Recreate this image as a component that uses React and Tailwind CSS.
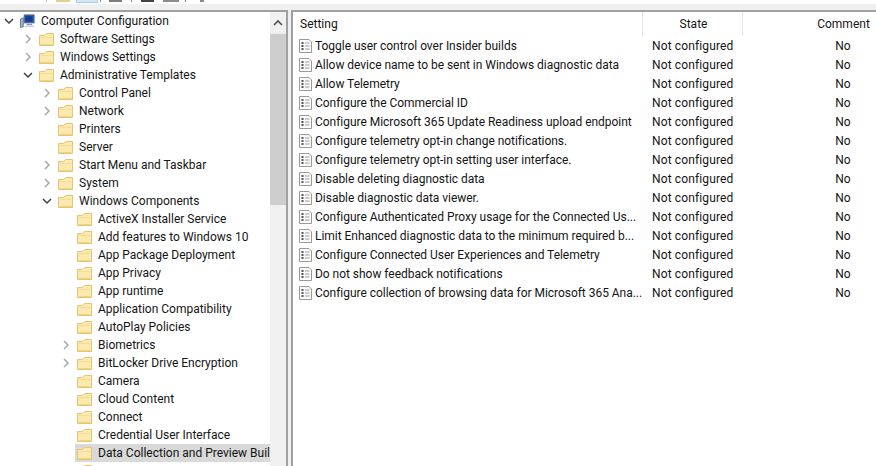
import React from 'react'

const font = { fontFamily: 'Roboto, "Open Sans", sans-serif' }

const indents = ['pl-0', 'pl-[19px]', 'pl-[38px]', 'pl-[57px]']

const treeRows = [
  { level: 0, label: 'Computer Configuration', state: 'open', icon: 'computer' },
  { level: 1, label: 'Software Settings', state: 'closed' },
  { level: 1, label: 'Windows Settings', state: 'closed' },
  { level: 1, label: 'Administrative Templates', state: 'open' },
  { level: 2, label: 'Control Panel', state: 'closed' },
  { level: 2, label: 'Network', state: 'closed' },
  { level: 2, label: 'Printers' },
  { level: 2, label: 'Server' },
  { level: 2, label: 'Start Menu and Taskbar', state: 'closed' },
  { level: 2, label: 'System', state: 'closed' },
  { level: 2, label: 'Windows Components', state: 'open' },
  { level: 3, label: 'ActiveX Installer Service' },
  { level: 3, label: 'Add features to Windows 10' },
  { level: 3, label: 'App Package Deployment' },
  { level: 3, label: 'App Privacy' },
  { level: 3, label: 'App runtime' },
  { level: 3, label: 'Application Compatibility' },
  { level: 3, label: 'AutoPlay Policies' },
  { level: 3, label: 'Biometrics', state: 'closed' },
  { level: 3, label: 'BitLocker Drive Encryption', state: 'closed' },
  { level: 3, label: 'Camera' },
  { level: 3, label: 'Cloud Content' },
  { level: 3, label: 'Connect' },
  { level: 3, label: 'Credential User Interface' },
  { level: 3, label: 'Data Collection and Preview Builds', selected: true },
  { level: 3, label: '' },
]

const settings = [
  'Toggle user control over Insider builds',
  'Allow device name to be sent in Windows diagnostic data',
  'Allow Telemetry',
  'Configure the Commercial ID',
  'Configure Microsoft 365 Update Readiness upload endpoint',
  'Configure telemetry opt-in change notifications.',
  'Configure telemetry opt-in setting user interface.',
  'Disable deleting diagnostic data',
  'Disable diagnostic data viewer.',
  'Configure Authenticated Proxy usage for the Connected Us...',
  'Limit Enhanced diagnostic data to the minimum required b...',
  'Configure Connected User Experiences and Telemetry',
  'Do not show feedback notifications',
  'Configure collection of browsing data for Microsoft 365 Ana...',
]

const Chevron = ({ state }) => {
  if (state === 'open') {
    return (
      <svg width="10" height="10" viewBox="0 0 10 10" fill="none">
        <path d="M1 3 L5 7 L9 3" stroke="#404040" strokeWidth="1.5" />
      </svg>
    )
  }
  if (state === 'closed') {
    return (
      <svg width="10" height="10" viewBox="0 0 10 10" fill="none">
        <path d="M3 1 L7 5 L3 9" stroke="#a8a8a8" strokeWidth="1.5" />
      </svg>
    )
  }
  return null
}

const FolderIcon = () => (
  <svg width="15" height="15" viewBox="0 0 15 15" className="shrink-0">
    <path d="M0.5 3.5 V13.5 H14.5 V1.5 H7.5 L5.5 3.5 Z" fill="#fbe9b0" stroke="#e3c672" />
    <path d="M1.5 5.5 H13.5" stroke="#f5dc94" />
    <path d="M1.5 12.5 H13.5" stroke="#f2d27c" />
  </svg>
)

const ComputerIcon = () => (
  <svg width="15" height="16" viewBox="0 0 16 16" className="shrink-0">
    <path d="M0.5 6 L3.5 4.5 V14 L0.5 15 Z" fill="#9fb4cf" stroke="#5f7696" />
    <rect x="4.5" y="1.5" width="10.5" height="8.5" fill="#1f55b5" stroke="#5a6a80" />
    <rect x="6" y="3" width="7" height="5.5" fill="#123a93" />
    <path d="M7 11 H13 V12.5 H7 Z" fill="#8a97a8" />
    <path d="M5 13 H15 V14.5 H5 Z" fill="#c3ccd8" />
  </svg>
)

const PolicyIcon = () => (
  <svg width="13" height="14" viewBox="0 0 13 14" className="shrink-0">
    <path d="M0.5 0.5 H10 L12.5 3 V13.5 H0.5 Z" fill="#fbfbfb" stroke="#9a9a9a" />
    <rect x="2.5" y="3" width="2" height="2" fill="#555" />
    <rect x="2.5" y="6" width="2" height="2" fill="#555" />
    <rect x="2.5" y="9" width="2" height="2" fill="#555" />
    <path d="M6 4 H10.5 M6 7 H10.5 M6 10 H10.5" stroke="#9c9c9c" />
  </svg>
)

const TreeRow = ({ row }) => (
  <div className={`flex h-[18px] shrink-0 items-center ${indents[row.level]}`}>
    <div className="flex w-[18px] shrink-0 items-center justify-center">
      <Chevron state={row.state} />
    </div>
    <div
      className={`flex h-[18px] flex-1 items-center gap-[6px] whitespace-nowrap pl-[2px] ${
        row.selected ? 'bg-[#d9d9d9]' : ''
      }`}
    >
      {row.icon === 'computer' ? <ComputerIcon /> : <FolderIcon />}
      <span>{row.label}</span>
    </div>
  </div>
)

const ToolbarBit = ({ className }) => <div className={`shrink-0 ${className}`} />

const App = () => {
  return (
    <div
      className="flex h-[466px] w-[876px] flex-col overflow-hidden bg-[#f0f0f0] text-[12px] text-[#141414]"
      style={font}
    >
      {/* clipped toolbar, only the bottom of its buttons shows */}
      <div className="flex h-[4px] shrink-0 bg-white">
        <ToolbarBit className="ml-[46px] h-[2px] w-px bg-[#bdbdbd]" />
        <ToolbarBit className="ml-[9px] h-[2px] w-[14px] bg-[#e5cf91]" />
        <ToolbarBit className="ml-[6px] h-[3px] w-[22px] border-x border-b border-[#a9cfe8] bg-[#d5e6f3]" />
        <ToolbarBit className="ml-[2px] h-[2px] w-px bg-[#8a8a8a]" />
        <ToolbarBit className="ml-[8px] h-[2px] w-[13px] bg-[#7d7d7d]" />
        <ToolbarBit className="ml-[9px] h-[2px] w-px bg-[#8a8a8a]" />
        <ToolbarBit className="ml-[9px] h-[2px] w-[13px] bg-[#444]" />
        <ToolbarBit className="ml-[9px] h-[2px] w-[16px] bg-[#8c8c8c]" />
        <ToolbarBit className="ml-[6px] h-[2px] w-px bg-[#8a8a8a]" />
        <ToolbarBit className="ml-[14px] h-[2px] w-[4px] bg-[#8c8c8c]" />
      </div>

      <div className="mt-[6px] flex min-h-0 flex-1 gap-[3px]">
        {/* tree panel */}
        <div className="flex w-[288px] shrink-0 overflow-hidden border-t-2 border-r-2 border-[#a0a0a0] bg-white">
          <div className="flex w-[270px] shrink-0 flex-col overflow-hidden">
            {treeRows.map((row, i) => (
              <TreeRow key={i} row={row} />
            ))}
          </div>
          <div className="flex w-[16px] shrink-0 flex-col bg-[#f0f0f0]">
            <div className="flex h-[22px] shrink-0 items-center justify-center">
              <svg width="10" height="8" viewBox="0 0 10 8" fill="none">
                <path d="M1 6 L5 2 L9 6" stroke="#505050" strokeWidth="1.6" />
              </svg>
            </div>
            <div className="h-[171px] shrink-0 bg-[#cdcdcd]" />
          </div>
        </div>

        {/* settings list */}
        <div className="flex min-w-0 flex-1 flex-col overflow-hidden border-t-2 border-l-2 border-[#a0a0a0] bg-white">
          <div className="flex h-[24px] shrink-0 items-center">
            <div className="w-[349px] shrink-0 pl-[7px]">Setting</div>
            <div className="h-full w-[100px] shrink-0 border-l border-[#e5e5e5] pl-[2px] text-center leading-[24px]">State</div>
            <div className="h-full w-[202px] shrink-0 border-l border-[#e5e5e5] text-center leading-[24px]">Comment</div>
          </div>
          {settings.map((name) => (
            <div key={name} className="flex h-[19px] shrink-0 items-center">
              <div className="flex w-[349px] shrink-0 items-center gap-[3px] overflow-hidden whitespace-nowrap pl-[6px]">
                <PolicyIcon />
                <span className="tracking-[-0.03px]">{name}</span>
              </div>
              <div className="w-[100px] shrink-0 pl-[10px] tracking-[0.13px]">Not configured</div>
              <div className="w-[202px] shrink-0 text-center">No</div>
            </div>
          ))}
        </div>
      </div>
    </div>
  )
}

export default App
